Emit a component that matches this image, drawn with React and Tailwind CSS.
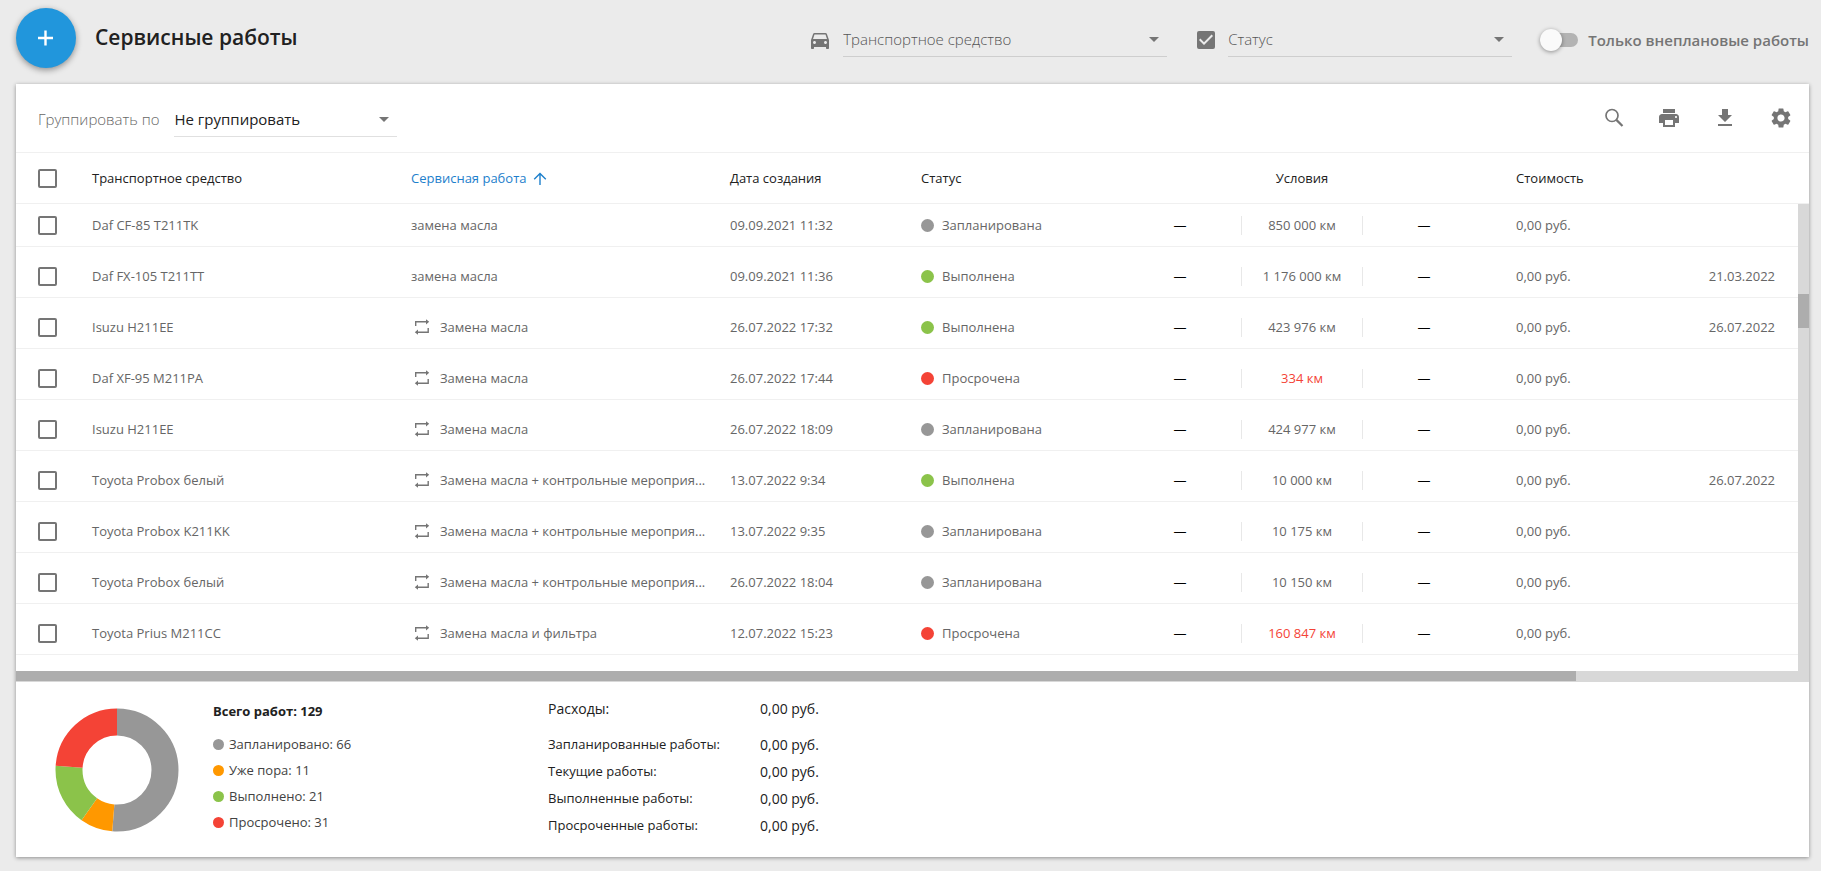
import { useState } from "react";
import {
  MdCheckBox,
  MdDirectionsCar,
  MdGetApp,
  MdPrint,
  MdSettings,
} from "react-icons/md";

const STATUSES = {
  planned: { label: "Запланирована", color: "bg-[#979797]" },
  done: { label: "Выполнена", color: "bg-[#8bc34a]" },
  overdue: { label: "Просрочена", color: "bg-[#f44336]" },
};

const WORKS = [
  { id: 1, vehicle: "Daf CF-85 T211TK", work: "замена масла", created: "09.09.2021 11:32", status: "planned", mileage: "850 000 км" },
  { id: 2, vehicle: "Daf FX-105 T211TT", work: "замена масла", created: "09.09.2021 11:36", status: "done", mileage: "1 176 000 км", finished: "21.03.2022" },
  { id: 3, vehicle: "Isuzu H211EE", work: "Замена масла", repeat: true, created: "26.07.2022 17:32", status: "done", mileage: "423 976 км", finished: "26.07.2022" },
  { id: 4, vehicle: "Daf XF-95 M211PA", work: "Замена масла", repeat: true, created: "26.07.2022 17:44", status: "overdue", mileage: "334 км" },
  { id: 5, vehicle: "Isuzu H211EE", work: "Замена масла", repeat: true, created: "26.07.2022 18:09", status: "planned", mileage: "424 977 км" },
  { id: 6, vehicle: "Toyota Probox белый", work: "Замена масла + контрольные мероприя...", repeat: true, created: "13.07.2022 9:34", status: "done", mileage: "10 000 км", finished: "26.07.2022" },
  { id: 7, vehicle: "Toyota Probox K211KK", work: "Замена масла + контрольные мероприя...", repeat: true, created: "13.07.2022 9:35", status: "planned", mileage: "10 175 км" },
  { id: 8, vehicle: "Toyota Probox белый", work: "Замена масла + контрольные мероприя...", repeat: true, created: "26.07.2022 18:04", status: "planned", mileage: "10 150 км" },
  { id: 9, vehicle: "Toyota Prius M211CC", work: "Замена масла и фильтра", repeat: true, created: "12.07.2022 15:23", status: "overdue", mileage: "160 847 км" },
];

const SUMMARY = [
  { label: "Запланировано", count: 66, dot: "bg-[#979797]", stroke: "#979797" },
  { label: "Уже пора", count: 11, dot: "bg-[#ff9800]", stroke: "#ff9800" },
  { label: "Выполнено", count: 21, dot: "bg-[#8bc34a]", stroke: "#8bc34a" },
  { label: "Просрочено", count: 31, dot: "bg-[#f44336]", stroke: "#f44336" },
];

const COSTS = [
  "Запланированные работы:",
  "Текущие работы:",
  "Выполненные работы:",
  "Просроченные работы:",
];

const TOTAL = SUMMARY.reduce((sum, item) => sum + item.count, 0);

function Select({ id, label, className, options }) {
  return (
    <div className={`relative ${className}`}>
      <select
        id={id}
        aria-label={label}
        className="h-[34px] w-full appearance-none border-b border-black/12 bg-transparent pr-8 outline-none"
      >
        {options.map((option) => (
          <option key={option}>{option}</option>
        ))}
      </select>
      <svg
        viewBox="0 0 10 5"
        className="pointer-events-none absolute top-3.5 right-2 h-[5px] w-2.5 fill-[#757575]"
      >
        <path d="M0 0h10L5 5z" />
      </svg>
    </div>
  );
}

function Checkbox({ label }) {
  return (
    <input
      type="checkbox"
      aria-label={label}
      className="block size-[19px] appearance-none rounded-xs border-2 border-[#757575] checked:bg-[#757575]"
    />
  );
}

function PlusIcon() {
  return (
    <svg viewBox="0 0 24 24" className="size-6 fill-none stroke-current">
      <path d="M11.5 4.5v15M4 12h15" strokeWidth="2.4" />
    </svg>
  );
}

function SearchIcon() {
  return (
    <svg viewBox="0 0 24 24" className="size-6 fill-none stroke-current">
      <circle cx="11" cy="9.5" r="6" strokeWidth="1.7" />
      <path d="M15.4 13.9l6.1 6.1" strokeWidth="2.2" />
    </svg>
  );
}

function SortIcon() {
  return (
    <svg viewBox="0 0 14 14" className="size-3.5 fill-none stroke-current">
      <path d="M7 13V1.7M1.2 7.2 7 1.4l5.8 5.8" strokeWidth="1.4" />
    </svg>
  );
}

function RepeatIcon() {
  return (
    <svg viewBox="0 0 16 16" className="size-4 shrink-0 fill-none stroke-[#757575]">
      <path d="M1.7 7V2.8h12" strokeWidth="1.4" />
      <path d="M14.2 9v4.2h-12" strokeWidth="1.4" />
      <path d="M12 .2l3.2 2.6L12 5.4zM4 10.6.8 13.2 4 15.8z" className="fill-[#757575] stroke-none" />
    </svg>
  );
}

function Donut() {
  const radius = 48;
  const length = 2 * Math.PI * radius;
  let offset = 0;

  return (
    <svg viewBox="0 0 124 124" className="size-[124px] -rotate-90">
      {SUMMARY.map((item) => {
        const part = (item.count / TOTAL) * length;
        const start = offset;
        offset += part;
        return (
          <circle
            key={item.label}
            cx="62"
            cy="62"
            r={radius}
            fill="none"
            stroke={item.stroke}
            strokeWidth="27"
            strokeDasharray={`${part} ${length - part}`}
            strokeDashoffset={-start}
          />
        );
      })}
    </svg>
  );
}

function WorkRow({ item }) {
  const status = STATUSES[item.status];

  return (
    <tr className="h-[51px] border-b border-[#f0f0f0] first:h-[43px] [&>td]:pt-2.5 first:[&>td]:pt-0.5">
      <td className="pl-[22px]">
        <Checkbox label={item.vehicle} />
      </td>
      <td>{item.vehicle}</td>
      <td>
        <div className="flex items-center">
          {item.repeat && (
            <span className="mr-2.5 mb-0.5 ml-[3px]">
              <RepeatIcon />
            </span>
          )}
          <span className="truncate">{item.work}</span>
        </div>
      </td>
      <td>{item.created}</td>
      <td>
        <div className="flex items-center gap-2">
          <span className={`size-[13px] rounded-full ${status.color}`} />
          {status.label}
        </div>
      </td>
      <td className="text-center text-black">—</td>
      <td className="text-center">
        <div
          className={`border-x border-[#e8e8e8] ${
            item.status === "overdue" ? "text-[#f44336]" : ""
          }`}
        >
          {item.mileage}
        </div>
      </td>
      <td className="text-center text-black">—</td>
      <td className="pl-[31px]">0,00 руб.</td>
      <td className="pr-[23px] text-right">{item.finished}</td>
    </tr>
  );
}

export default function App() {
  const [unplannedOnly, setUnplannedOnly] = useState(false);

  return (
    <div className="min-h-screen bg-[#ebebeb] pr-3 pb-3.5 pl-4 font-['Open_Sans',sans-serif] text-[#212121]">
      {/* Page header */}
      <header className="flex h-21 items-center pb-2">
        <button
          aria-label="Добавить"
          className="flex size-15 items-center justify-center rounded-full bg-[#2196dc] text-white shadow-[0_2px_6px_rgba(0,0,0,0.4)]"
        >
          <PlusIcon />
        </button>
        <h1 className="ml-[19px] text-[21px] font-semibold">Сервисные работы</h1>

        <div className="mt-1 ml-auto flex items-center text-[15px] text-[#757575]">
          <MdDirectionsCar className="mr-[11px] size-6" />
          <Select
            id="vehicle"
            label="Транспортное средство"
            className="w-[324px] font-light text-[#555]"
            options={["Транспортное средство"]}
          />
          <MdCheckBox className="mr-2.5 ml-[27px] size-6" />
          <Select
            id="status"
            label="Статус"
            className="w-[284px] font-light text-[#555]"
            options={["Статус"]}
          />
          <label className="ml-7 flex items-center font-semibold">
            <input
              type="checkbox"
              checked={unplannedOnly}
              onChange={(e) => setUnplannedOnly(e.target.checked)}
              className="peer sr-only"
            />
            <span className="mr-2.5 flex h-3.5 w-[38px] items-center rounded-full bg-[#b3b3b3] peer-checked:justify-end">
              <span className="size-[22px] rounded-full bg-[#fafafa] shadow-[0_1px_4px_rgba(0,0,0,0.4)]" />
            </span>
            Только внеплановые работы
          </label>
        </div>
      </header>

      <main className="bg-white shadow-[0_1px_4px_rgba(0,0,0,0.4)]">
        {/* Toolbar */}
        <div className="flex h-[69px] items-center border-b border-[#f0f0f0] pr-4 pl-[22px] text-[15px]">
          <div className="flex items-center pt-1">
            <label htmlFor="group" className="mr-[15px] pb-0.5 font-light text-[#666]">
              Группировать по
            </label>
            <Select id="group" className="w-[223px]" options={["Не группировать"]} />
          </div>
          <div className="ml-auto flex gap-8 text-[#757575]">
            <button aria-label="Поиск">
              <SearchIcon />
            </button>
            <button aria-label="Печать">
              <MdPrint className="size-6" />
            </button>
            <button aria-label="Скачать">
              <MdGetApp className="size-6" />
            </button>
            <button aria-label="Настройки">
              <MdSettings className="size-6" />
            </button>
          </div>
        </div>

        {/* Works table */}
        <div className="flex">
          <div className="min-w-0 flex-1 pb-4">
            <table className="w-full table-fixed border-collapse text-[13px] text-[#666]">
              <colgroup>
                <col className="w-[76px]" />
                <col />
                <col />
                <col className="w-[191px]" />
                <col className="w-[198px]" />
                <col className="w-[122px]" />
                <col className="w-[122px]" />
                <col className="w-[122px]" />
                <col className="w-[135px]" />
                <col className="w-[178px]" />
              </colgroup>
              <thead>
                <tr className="h-[50px] border-b border-[#f0f0f0] text-left text-[#212121] [&>th]:pt-0.5 [&>th]:font-medium">
                  <th className="pl-[22px]">
                    <Checkbox label="Выбрать все" />
                  </th>
                  <th>Транспортное средство</th>
                  <th>
                    <button className="flex items-center gap-1.5 text-[#1e80cc]">
                      Сервисная работа
                      <SortIcon />
                    </button>
                  </th>
                  <th>Дата создания</th>
                  <th>Статус</th>
                  <th colSpan={3} className="text-center">
                    Условия
                  </th>
                  <th className="pl-[31px]">Стоимость</th>
                  <th />
                </tr>
              </thead>
              <tbody>
                {WORKS.map((item) => (
                  <WorkRow key={item.id} item={item} />
                ))}
              </tbody>
            </table>
          </div>
          <div className="flex w-[11px] flex-col">
            <div className="h-[51px] border-b border-[#f0f0f0]" />
            <div className="flex-1 bg-[#d8d8d8] pt-[90px]">
              <div className="h-[34px] bg-[#adadad]" />
            </div>
          </div>
        </div>
        <div className="h-[11px] bg-[#d8d8d8]">
          <div className="h-2.5 w-[87%] bg-[#adadad]" />
        </div>

        {/* Summary */}
        <footer className="flex px-[39px] pt-3.5 pb-[17px]">
          <div className="pt-3">
            <Donut />
          </div>
          <div className="ml-[34px] w-[335px] pt-[3px] text-[13px] text-[#424242]">
            <h2 className="mb-[11px] h-[22px] pt-0.5 leading-5 font-bold text-[#212121]">
              Всего работ: {TOTAL}
            </h2>
            <ul>
              {SUMMARY.map((item) => (
                <li key={item.label} className="flex h-[26px] items-center gap-[5px]">
                  <span className={`size-[11px] rounded-full ${item.dot}`} />
                  {item.label}: {item.count}
                </li>
              ))}
            </ul>
          </div>
          <dl className="grid grid-cols-[212px_auto] grid-rows-[36px_repeat(4,27px)] items-center text-[13px]">
            <dt className="pb-[9px] text-sm font-medium">Расходы:</dt>
            <dd className="pb-[9px] text-sm font-medium">0,00 руб.</dd>
            {COSTS.map((label) => (
              <div key={label} className="contents">
                <dt>{label}</dt>
                <dd className="text-sm font-medium">0,00 руб.</dd>
              </div>
            ))}
          </dl>
        </footer>
      </main>
    </div>
  );
}
